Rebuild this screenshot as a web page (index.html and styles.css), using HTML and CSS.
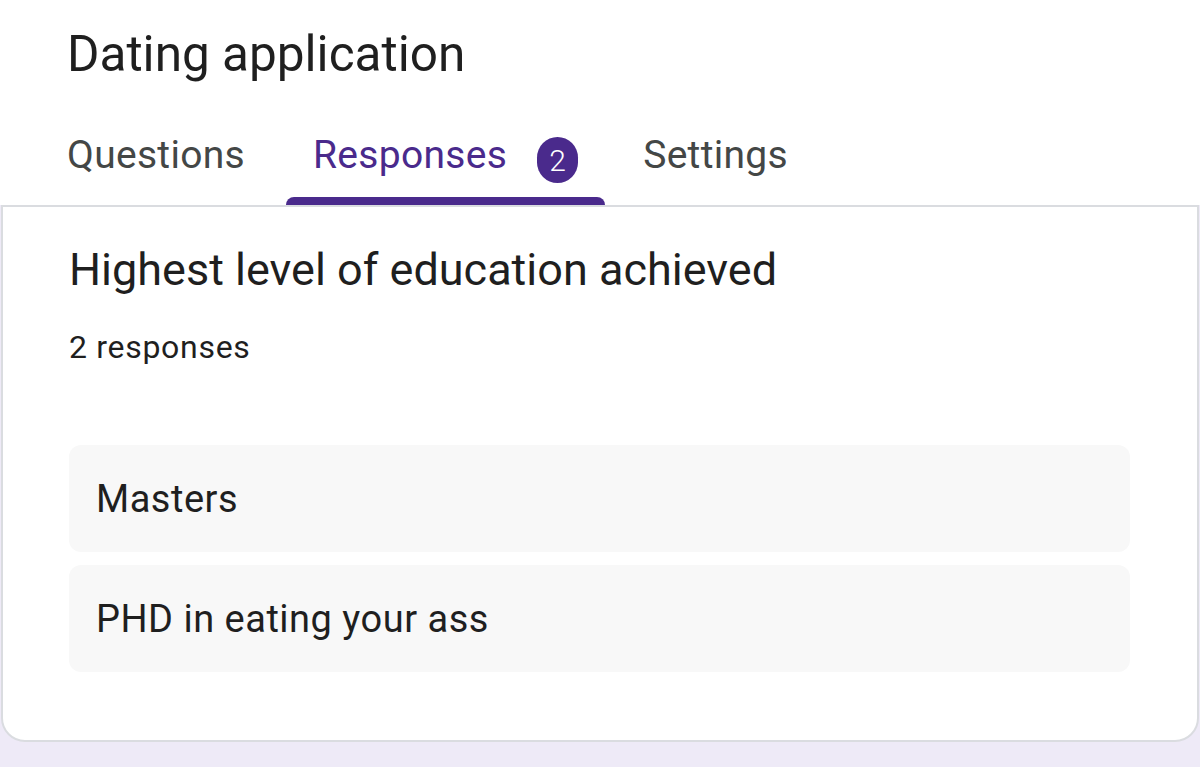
FILE: index.html
```html
<!DOCTYPE html>
<html lang="en">
<head>
    <meta charset="UTF-8">
    <meta name="viewport" content="width=device-width, initial-scale=1.0">
    <title>Dating application - Responses</title>
    <link rel="stylesheet" href="styles.css">
</head>
<body>
    <header class="form-header">
        <h1 class="form-title">Dating application</h1>
        <nav class="tabs">
            <div class="tab">
                <span class="tab-label">Questions</span>
                <span class="tab-bar"></span>
            </div>
            <div class="tab active">
                <span class="tab-label">Responses <span class="badge">2</span></span>
                <span class="tab-bar"></span>
            </div>
            <div class="tab">
                <span class="tab-label">Settings</span>
                <span class="tab-bar"></span>
            </div>
        </nav>
    </header>

    <main class="card">
        <h2 class="question">Highest level of education achieved</h2>
        <p class="count">2 responses</p>

        <div class="answers">
            <div class="answer">Masters</div>
            <div class="answer">PHD in eating your ass</div>
        </div>
    </main>
</body>
</html>
```

FILE: styles.css
```css
html, body {
    margin: 0;
    padding: 0;
}
body {
    font-family: Roboto, "Liberation Sans", sans-serif;
    background: #eeeaf7;
    color: #202124;
    min-height: 767px;
}
.form-header {
    background: white;
    padding-top: 24px;
}
.form-title {
    margin: 0 0 0 67px;
    font-size: 49.5px;
    font-weight: 400;
    line-height: 60px;
    color: #1f1f1f;
}
.tabs {
    display: flex;
    gap: 14px;
    padding-left: 40px;
    margin-top: 28px;
}
.tab {
    display: flex;
    flex-direction: column;
    font-size: 39px;
    letter-spacing: 0.3px;
    color: #444746;
}
.tab-label {
    display: flex;
    align-items: center;
    gap: 30px;
    height: 85px;
    padding: 0 27px;
    white-space: nowrap;
}
.tab-bar {
    height: 8px;
    border-radius: 8px 8px 0 0;
}
.tab.active { color: #4a2a8c; }
.tab.active .tab-bar { background: #4a2a8c; }
.tab:last-child { margin-left: -3px; }
.badge {
    display: inline-flex;
    align-items: center;
    justify-content: center;
    width: 41px;
    height: 46px;
    margin-top: 11px;
    border-radius: 21px;
    background: #4a2a8c;
    color: white;
    font-size: 30px;
    font-weight: 300;
    letter-spacing: 0;
}
.card {
    background: white;
    margin-left: 1px;
    width: 1198px;
    box-sizing: border-box;
    border: 2px solid #dadce0;
    border-radius: 0 0 24px 24px;
    padding: 0 67px 68px 66px;
}
.question {
    margin: 0;
    padding-top: 37px;
    font-size: 45px;
    font-weight: 400;
    line-height: 52px;
    color: #1f1f1f;
}
.count {
    margin: 33px 0 0;
    font-size: 32px;
    line-height: 36px;
    letter-spacing: 0.7px;
    color: #1f1f1f;
}
.answers {
    display: flex;
    flex-direction: column;
    gap: 13px;
    margin-top: 80px;
}
.answer {
    background: #f8f8f8;
    border-radius: 12px;
    height: 107px;
    display: flex;
    align-items: center;
    padding-left: 27px;
    font-size: 38px;
    letter-spacing: 0.5px;
    color: #1f1f1f;
}
```
